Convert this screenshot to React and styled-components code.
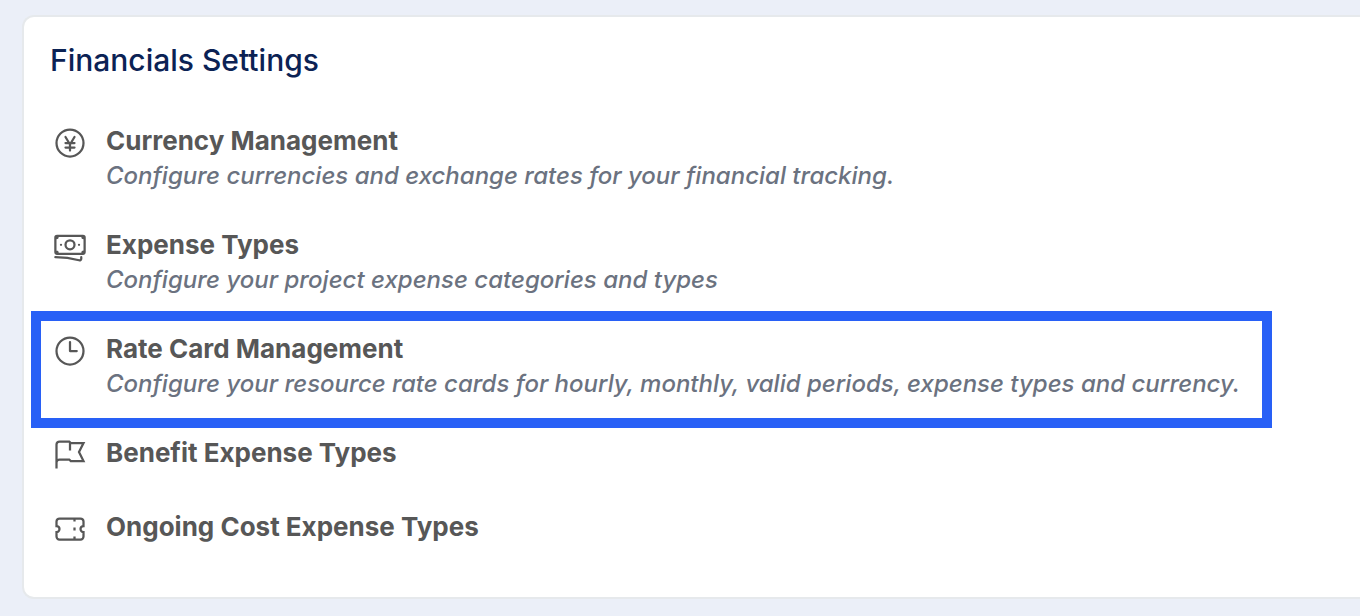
import React from 'react';
import styled, { createGlobalStyle } from 'styled-components';

const GlobalStyle = createGlobalStyle`
  * {
    box-sizing: border-box;
  }

  body {
    margin: 0;
    background: #ebeff8;
    font-family: Inter, "Liberation Sans", sans-serif;
  }
`;

const Page = styled.main`
  padding: 15px 0 17px 22px;
`;

const Card = styled.section`
  padding: 24px 26px 48px;
  background: #fff;
  border: 2px solid #e6e9ec;
  border-right: 0;
  border-radius: 12px 0 0 12px;
`;

const Heading = styled.h1`
  margin: 0 0 44px;
  font-weight: 500;
  font-size: 30px;
  line-height: 38px;
  color: #0b2254;
`;

const List = styled.ul`
  display: flex;
  flex-direction: column;
  align-items: flex-start;
  gap: 34px;
  margin: 0;
  padding: 0 2px;
  list-style: none;
`;

const ListItem = styled.li`
  position: relative;
`;

// Frame drawn around the item that is being pointed out
const Highlight = styled.span`
  position: absolute;
  inset: -20px -32px -27px -21px;
  border: 10px solid #2860f6;
  pointer-events: none;
`;

const ItemLink = styled.a`
  display: flex;
  align-items: flex-start;
  gap: 18px;
  color: #575757;
  text-decoration: none;
`;

const Icon = styled.svg`
  flex: none;
  width: 36px;
  height: 40px;
  fill: none;
  stroke: currentColor;
  stroke-width: 1.5;
  stroke-linecap: ${props => (props.$sharp ? 'butt' : 'round')};
  stroke-linejoin: ${props => (props.$sharp ? 'miter' : 'round')};
`;

const Title = styled.span`
  display: block;
  font-weight: 700;
  font-size: 26px;
  line-height: 36px;
`;

const Description = styled.span`
  display: block;
  font-style: italic;
  font-weight: 500;
  font-size: 24px;
  line-height: 34px;
  color: #6b7280;
`;

const items = [
  {
    title: 'Currency Management',
    description: 'Configure currencies and exchange rates for your financial tracking.',
    icon: 'M9 8l3 5m0 0l3-5m-3 5v4m-3-5h6m-6 3h6m6-3a9 9 0 11-18 0 9 9 0 0118 0z',
  },
  {
    title: 'Expense Types',
    description: 'Configure your project expense categories and types',
    icon:
      'M2.25 18.75a60.07 60.07 0 0 1 15.797 2.101c.727.198 1.453-.342 1.453-1.096V18.75M3.75 4.5v.75A.75.75 0 0 1 3 6h-.75m0 0v-.375c0-.621.504-1.125 1.125-1.125H20.25M2.25 6v9m18-10.5v.75c0 .414.336.75.75.75h.75m-1.5-1.5h.375c.621 0 1.125.504 1.125 1.125v9.75c0 .621-.504 1.125-1.125 1.125h-.375m1.5-1.5H21a.75.75 0 0 0-.75.75v.75m0 0H3.75m0 0h-.375a1.125 1.125 0 0 1-1.125-1.125V15m1.5 1.5v-.75A.75.75 0 0 0 3 15h-.75M15 10.5a3 3 0 1 1-6 0 3 3 0 0 1 6 0Zm3 0h.008v.008H18V10.5Zm-12 0h.008v.008H6V10.5Z',
  },
  {
    title: 'Rate Card Management',
    description:
      'Configure your resource rate cards for hourly, monthly, valid periods, expense types and currency.',
    icon: 'M12 6v6h4.5m4.5 0a9 9 0 1 1-18 0 9 9 0 0 1 18 0Z',
    highlighted: true,
  },
  {
    title: 'Benefit Expense Types',
    icon: 'M3 21v-4m0 0V5a2 2 0 012-2h6.5l1 1H21l-3 6 3 6h-8.5l-1-1H5a2 2 0 00-2 2zm9-13.5V9',
    sharp: true,
  },
  {
    title: 'Ongoing Cost Expense Types',
    icon:
      'M15 5v2m0 4v2m0 4v2M5 5a2 2 0 00-2 2v3a2 2 0 110 4v3a2 2 0 002 2h14a2 2 0 002-2v-3a2 2 0 110-4V7a2 2 0 00-2-2H5z',
    sharp: true,
  },
];

export default () => {
  return (
    <Page>
      <GlobalStyle />
      <Card>
        <Heading>Financials Settings</Heading>
        <List>
          {items.map(item => {
            return (
              <ListItem key={item.title}>
                <ItemLink href="#">
                  <Icon viewBox="0 0 24 24" aria-hidden="true" $sharp={item.sharp}>
                    <path d={item.icon} />
                  </Icon>
                  <span>
                    <Title>{item.title}</Title>
                    {item.description && <Description>{item.description}</Description>}
                  </span>
                </ItemLink>
                {item.highlighted && <Highlight />}
              </ListItem>
            );
          })}
        </List>
      </Card>
    </Page>
  );
};
